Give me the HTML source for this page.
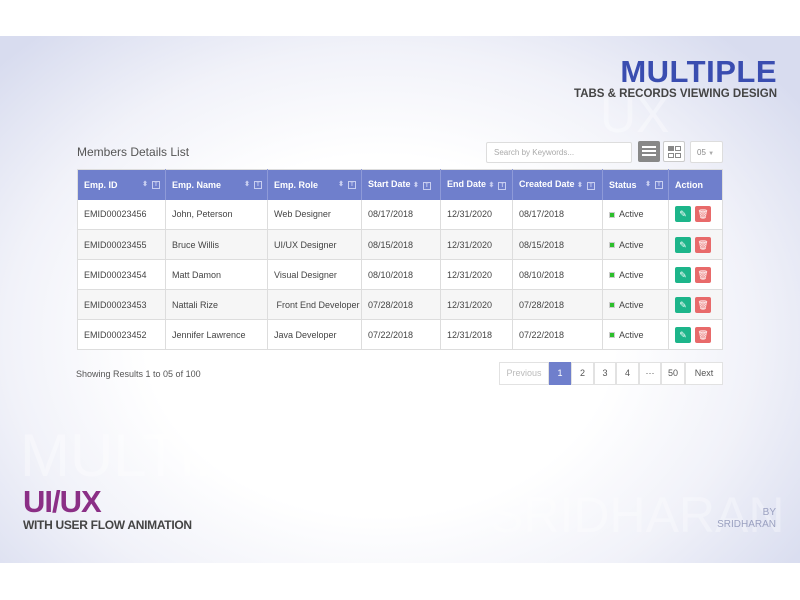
<!DOCTYPE html>
<html><head><style>
*{margin:0;padding:0;box-sizing:border-box}
body{width:800px;height:600px;background:#fff;font-family:"Liberation Sans",sans-serif;position:relative;overflow:hidden}
.bg{position:absolute;left:0;top:36px;width:800px;height:527px;background:radial-gradient(ellipse 520px 400px at 380px 300px,#ffffff 45%,#f1f2f9 72%,#d8dcef 100%);overflow:hidden}
.abs{position:absolute}
table{border-collapse:collapse;position:absolute;left:77px;top:169px;width:646px;font-size:9px;color:#444;border:1px solid #ddd}
th{background:#6f7fcc;color:#fff;height:30px;text-align:left;padding-left:6px;font-size:9px;border-right:1px solid #8e9ad8;white-space:nowrap}
td{height:30px;padding-left:6px;border-right:1px solid #ddd;border-bottom:1px solid #ddd;background:#fff;white-space:nowrap}
tr:nth-child(odd) td{background:#f6f6f6}
.ic{float:right;margin-right:5px;font-size:7px;color:#c8cef0}
.f{display:inline-block;width:8px;height:8px;border:1px solid #c8cef0;font-size:6px;text-align:center;line-height:6px;margin-left:4px}
.dot{display:inline-block;width:6px;height:6px;background:#2bbf2b;border:1px solid #ccc;margin-right:4px;vertical-align:middle}
.b{display:inline-block;width:16px;height:16px;border-radius:2px;vertical-align:middle;margin-right:4px;color:#fff;font-size:9px;text-align:center;line-height:16px}
.pg{position:absolute;top:362px;height:23px;border:1px solid #e2e2e2;background:#fff;font-size:9px;color:#555;text-align:center;line-height:21px}
</style></head><body>
<div class="bg">
<div class="abs" style="left:600px;top:50px;font-size:50px;color:rgba(255,255,255,.35)">UX</div>
<div class="abs" style="left:20px;top:385px;font-size:60px;color:rgba(255,255,255,.35)">MULTIPLE</div>
<div class="abs" style="left:490px;top:450px;font-size:50px;color:rgba(255,255,255,.3)">SRIDHARAN</div>
</div>
<div class="abs" style="right:23px;top:54px;font-size:31px;font-weight:bold;color:#3a4db0;letter-spacing:0.5px">MULTIPLE</div>
<div class="abs" style="right:23px;top:88px;font-size:11.5px;font-weight:bold;color:#444">TABS &amp; RECORDS VIEWING DESIGN</div>
<div class="abs" style="left:77px;top:145px;font-size:12px;color:#555">Members Details List</div>
<div class="abs" style="left:486px;top:142px;width:146px;height:21px;border:1px solid #ddd;border-radius:2px;background:#fff;font-size:8px;color:#aaa;padding:5px 7px">Search by Keywords...</div>
<div class="abs" style="left:638px;top:141px;width:22px;height:21px;background:#888;border-radius:2px"><div style="margin:5px 4px;height:10px;border-top:2px solid #fff;border-bottom:2px solid #fff;position:relative"><div style="position:absolute;top:2px;left:0;right:0;border-top:2px solid #fff"></div></div></div>
<div class="abs" style="left:663px;top:141px;width:22px;height:21px;border:1px solid #ccc;background:#fff;border-radius:2px"><div class="abs" style="left:4px;top:4px;width:6px;height:5px;background:#888"></div><div class="abs" style="left:11px;top:4px;width:6px;height:5px;border:1px solid #888"></div><div class="abs" style="left:4px;top:11px;width:6px;height:5px;border:1px solid #888"></div><div class="abs" style="left:11px;top:11px;width:6px;height:5px;border:1px solid #888"></div></div>
<div class="abs" style="left:690px;top:141px;width:33px;height:22px;border:1px solid #ddd;background:#fff;border-radius:2px;font-size:8px;color:#888;padding:6px 6px;white-space:nowrap">05 <span style="font-size:6px;color:#aaa">▼</span></div>
<table>
<tr><th style="width:88px">Emp. ID<span class="ic">⬍<span class="f">T</span></span></th><th style="width:102px">Emp. Name<span class="ic">⬍<span class="f">T</span></span></th><th style="width:94px">Emp. Role<span class="ic">⬍<span class="f">T</span></span></th><th style="width:79px">Start Date <span style="font-size:7px;color:#c8cef0">⬍<span class="f">T</span></span></th><th style="width:72px">End Date <span style="font-size:7px;color:#c8cef0">⬍<span class="f">T</span></span></th><th style="width:90px">Created Date <span style="font-size:7px;color:#c8cef0">⬍<span class="f">T</span></span></th><th style="width:66px">Status<span class="ic">⬍<span class="f">T</span></span></th><th style="border-right:none">Action</th></tr>
<tr><td>EMID00023456</td><td>John, Peterson</td><td>Web Designer</td><td>08/17/2018</td><td>12/31/2020</td><td>08/17/2018</td><td><span class="dot"></span>Active</td><td><span class="b" style="background:#1db58a">✎</span><span class="b" style="background:#e86a6a">🗑</span></td></tr>
<tr><td>EMID00023455</td><td>Bruce Willis</td><td>UI/UX Designer</td><td>08/15/2018</td><td>12/31/2020</td><td>08/15/2018</td><td><span class="dot"></span>Active</td><td><span class="b" style="background:#1db58a">✎</span><span class="b" style="background:#e86a6a">🗑</span></td></tr>
<tr><td>EMID00023454</td><td>Matt Damon</td><td>Visual Designer</td><td>08/10/2018</td><td>12/31/2020</td><td>08/10/2018</td><td><span class="dot"></span>Active</td><td><span class="b" style="background:#1db58a">✎</span><span class="b" style="background:#e86a6a">🗑</span></td></tr>
<tr><td>EMID00023453</td><td>Nattali Rize</td><td>&nbsp;Front End Developer</td><td>07/28/2018</td><td>12/31/2020</td><td>07/28/2018</td><td><span class="dot"></span>Active</td><td><span class="b" style="background:#1db58a">✎</span><span class="b" style="background:#e86a6a">🗑</span></td></tr>
<tr><td>EMID00023452</td><td>Jennifer Lawrence</td><td>Java Developer</td><td>07/22/2018</td><td>12/31/2018</td><td>07/22/2018</td><td><span class="dot"></span>Active</td><td><span class="b" style="background:#1db58a">✎</span><span class="b" style="background:#e86a6a">🗑</span></td></tr>
</table>
<div class="abs" style="left:76px;top:369px;font-size:9px;color:#555">Showing Results 1 to 05 of 100</div>
<div class="pg" style="left:499px;width:50px;color:#bbb">Previous</div>
<div class="pg" style="left:549px;width:22px;background:#6f7fcc;color:#fff;border-color:#6f7fcc">1</div>
<div class="pg" style="left:571px;width:23px">2</div>
<div class="pg" style="left:594px;width:22px">3</div>
<div class="pg" style="left:616px;width:23px">4</div>
<div class="pg" style="left:639px;width:22px">···</div>
<div class="pg" style="left:661px;width:24px">50</div>
<div class="pg" style="left:685px;width:38px">Next</div>
<div class="abs" style="left:23px;top:484px;font-size:31px;font-weight:bold;color:#8b2f86;letter-spacing:-1px">UI/UX</div>
<div class="abs" style="left:23px;top:518px;font-size:12px;font-weight:bold;color:#444;letter-spacing:-0.3px">WITH USER FLOW ANIMATION</div>
<div class="abs" style="right:24px;top:507px;font-size:10px;color:#9aa0c0;text-align:right;line-height:12px">BY<br>SRIDHARAN</div>
</body></html>
